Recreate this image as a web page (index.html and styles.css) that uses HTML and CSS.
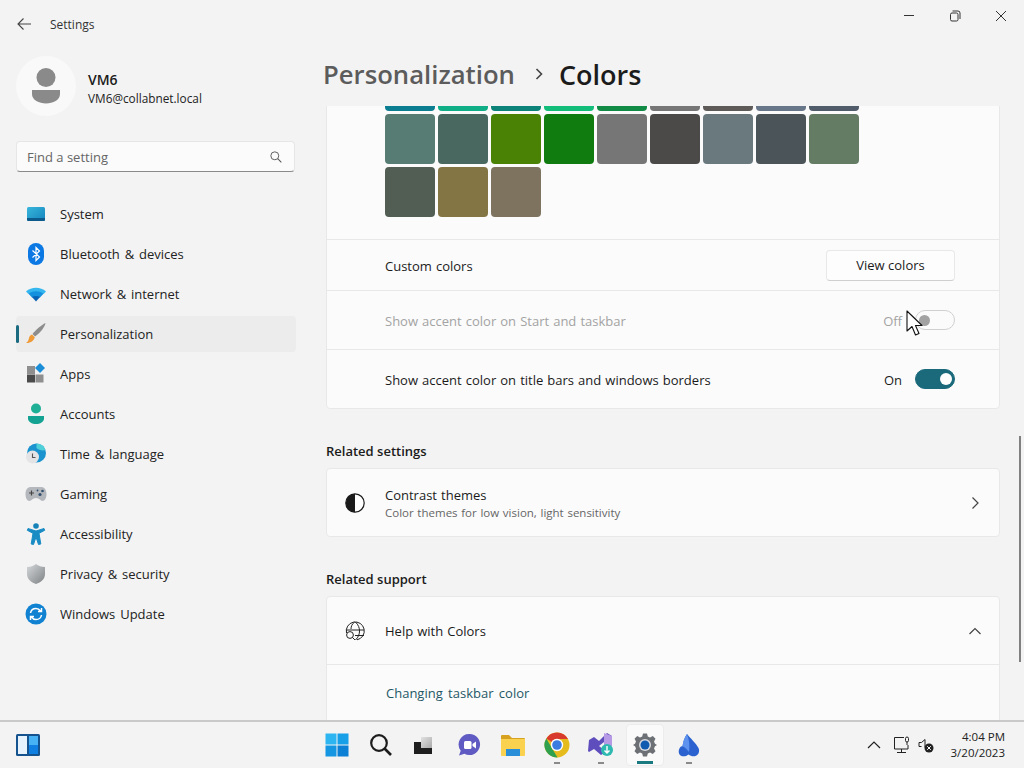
FILE: index.html
```html
<!DOCTYPE html>
<html lang="en">
<head>
    <meta charset="UTF-8">
    <title>Settings</title>
    <link rel="stylesheet" href="styles.css">
</head>
<body>
<div class="window">
    <!-- sidebar -->
    <aside class="sidebar">
        <div class="app-title">
            <svg class="back-icon" width="16" height="16" viewBox="0 0 16 16"><path d="M15 8H2M7.500 2.500 2 8l5.500 5.500" fill="none" stroke="#444" stroke-width="1.100"/></svg>
            <span>Settings</span>
        </div>
        <div class="user">
            <div class="avatar">
                <svg width="30" height="36" viewBox="0 0 30 36"><circle cx="15" cy="9.500" r="9.500" fill="#8a8a8a"/><path d="M1 22h28v4c0 6-7 9.500-14 9.500S1 32 1 26z" fill="#8a8a8a"/></svg>
            </div>
            <div class="user-info">
                <div class="user-name">VM6</div>
                <div class="user-mail">VM6@collabnet.local</div>
            </div>
        </div>
        <div class="search">
            <span>Find a setting</span>
            <svg width="12" height="12" viewBox="0 0 13 13"><circle cx="5.200" cy="5.200" r="4.300" fill="none" stroke="#555"/><path d="M8.300 8.300 12.300 12.300" stroke="#555" stroke-width="1.100"/></svg>
        </div>
        <nav class="nav">
            <div class="nav-item">
                <svg width="22" height="22" viewBox="0 0 22 22"><defs><linearGradient id="sys" x1="0" y1="0" x2="1" y2="1"><stop offset="0" stop-color="#38b6dc"/><stop offset="1" stop-color="#1484bd"/></linearGradient></defs><rect x="2" y="4" width="18" height="14" rx="1.500" fill="url(#sys)"/><path d="M2 15h18v1.500a1.500 1.500 0 0 1-1.500 1.500h-15A1.500 1.500 0 0 1 2 16.500z" fill="#0c5a8c"/></svg>
                <span>System</span>
            </div>
            <div class="nav-item">
                <svg width="22" height="22" viewBox="0 0 22 22"><rect x="3" y="0" width="16" height="22" rx="8" fill="#0b78e3"/><path d="M7.500 7.500 14.500 14 11 17.500V4.500L14.500 8 7.500 14.500" fill="none" stroke="#fff" stroke-width="1.200"/></svg>
                <span>Bluetooth &amp; devices</span>
            </div>
            <div class="nav-item">
                <svg width="22" height="22" viewBox="0 0 22 22"><path d="M1 8.500C6.500 3.500 15.500 3.500 21 8.500L18.500 11H3.500z" fill="#35b6ee"/><path d="M3.500 10.800C8 7.500 14 7.500 18.500 10.800L15 14.500H7z" fill="#1590de"/><path d="M7 14c2.400-1.500 5.600-1.500 8 0l-4 4.500z" fill="#0a62b4"/></svg>
                <span>Network &amp; internet</span>
            </div>
            <div class="nav-item is-active">
                <svg width="22" height="22" viewBox="0 0 22 22"><path d="M20.500 0C20 4 15 10 10 13.500L7.500 11C11 6.500 16.500 2 20.500 0z" fill="#8d8d8d"/><path d="M7 11.500 9.800 14.300C9 18 5 20.500 1 20c2-1 2.500-3 3-5 .4-1.700 1.500-3 3-3.500z" fill="#ef9a37"/></svg>
                <span>Personalization</span>
            </div>
            <div class="nav-item">
                <svg width="22" height="22" viewBox="0 0 22 22"><rect x="2" y="3" width="8" height="8" fill="#8f8f8f"/><rect x="2" y="11.500" width="8" height="8" fill="#4a4a4a"/><rect x="10.500" y="11.500" width="8" height="8" fill="#8f8f8f"/><path d="M15 0l5 5-5 5-5-5z" fill="#1c8ed8"/></svg>
                <span>Apps</span>
            </div>
            <div class="nav-item">
                <svg width="22" height="22" viewBox="0 0 22 22"><circle cx="11" cy="5.500" r="5" fill="#1fae96"/><path d="M3 13h16v2.500c0 3.500-4 5.500-8 5.500s-8-2-8-5.500z" fill="#14a392"/></svg>
                <span>Accounts</span>
            </div>
            <div class="nav-item">
                <svg width="22" height="22" viewBox="0 0 22 22"><circle cx="11.500" cy="10" r="9.500" fill="#1b93cf"/><path d="M11.500 .5a9.500 9.500 0 0 1 9 6.500c-3 1-7 0-9-2z" fill="#4fd0d8"/><circle cx="7.500" cy="14" r="6.500" fill="#e4e4e6"/><path d="M7.500 10.500v4h3" fill="none" stroke="#555" stroke-width="1.100"/></svg>
                <span>Time &amp; language</span>
            </div>
            <div class="nav-item">
                <svg width="22" height="22" viewBox="0 0 22 22"><path d="M5.500 4h11c3 0 5 3 5 7s-1.500 7-4 7c-2 0-3-3-6.500-3s-4.500 3-6.500 3c-2.500 0-4-3-4-7s2-7 5-7z" fill="#b4b8bd"/><path d="M4 10h5M6.500 7.500v5" stroke="#444" stroke-width="1.200"/><circle cx="15" cy="11.500" r="1.600" fill="#35506e"/><circle cx="17.500" cy="8" r="1.300" fill="#35506e"/><circle cx="12.500" cy="7.500" r=".9" fill="#35506e"/></svg>
                <span>Gaming</span>
            </div>
            <div class="nav-item">
                <svg width="22" height="22" viewBox="0 0 22 22"><circle cx="11" cy="3" r="2.800" fill="#1683b8"/><path d="M3 5.500 11 8l8-2.500.7 1.800-5.700 3 1.800 10.700-2.300.5L11 14l-2.500 7.500-2.300-.5L8 10.300l-5.700-3z" fill="#1a8cc4" stroke="#1a8cc4" stroke-linejoin="round"/></svg>
                <span>Accessibility</span>
            </div>
            <div class="nav-item">
                <svg width="22" height="22" viewBox="0 0 22 22"><defs><linearGradient id="shield" x1="0" y1="0" x2="1" y2="1"><stop offset="0" stop-color="#d5d7d9"/><stop offset="1" stop-color="#7e8285"/></linearGradient></defs><path d="M11 1c2.500 2 5.500 3 9 3v7c0 5-4 8.500-9 10-5-1.500-9-5-9-10V4c3.500 0 6.500-1 9-3z" fill="url(#shield)"/></svg>
                <span>Privacy &amp; security</span>
            </div>
            <div class="nav-item">
                <svg width="22" height="22" viewBox="0 0 22 22"><circle cx="11" cy="11" r="10.500" fill="#1182d2"/><path d="M5.500 10C6 7 8.500 5.500 11 5.500c2 0 3.500 1 4.500 2.500M16.500 5v3.500H13M16.500 12c-.5 3-3 4.500-5.500 4.500-2 0-3.500-1-4.500-2.500M5.500 17v-3.500H9" fill="none" stroke="#fff" stroke-width="1.500"/></svg>
                <span>Windows Update</span>
            </div>
        </nav>
    </aside>

    <!-- content -->
    <main class="main">
        <div class="caption-buttons">
            <svg width="12" height="12" viewBox="0 0 12 12"><path d="M1 5.500H11" stroke="#333"/></svg>
            <svg width="12" height="12" viewBox="0 0 12 12"><rect x="1.500" y="3" width="7.500" height="8" rx="1.500" fill="none" stroke="#333"/><path d="M3.500 1h5.500a2 2 0 0 1 2 2v6" fill="none" stroke="#333"/></svg>
            <svg width="12" height="12" viewBox="0 0 12 12"><path d="M1 1 11 11M11 1 1 11" stroke="#333"/></svg>
        </div>
        <h1 class="breadcrumb">
            <span class="crumb-parent">Personalization</span>
            <svg class="crumb-sep" width="12" height="12" viewBox="0 0 12 12"><path d="M3.500 1 8.500 6 3.500 11" fill="none" stroke="#444" stroke-width="1.600"/></svg>
            <span class="crumb-current">Colors</span>
        </h1>
        <div class="scroller">
            <section class="card accent-card">
                <div class="swatches">
                    <div class="swatch" style="background:#0b7d90"></div>
                    <div class="swatch" style="background:#10ae86"></div>
                    <div class="swatch" style="background:#0c8378"></div>
                    <div class="swatch" style="background:#12bd7a"></div>
                    <div class="swatch" style="background:#118a45"></div>
                    <div class="swatch" style="background:#767676"></div>
                    <div class="swatch" style="background:#5d5a58"></div>
                    <div class="swatch" style="background:#68768a"></div>
                    <div class="swatch" style="background:#515c6b"></div>
                    <div class="swatch" style="background:#567c73"></div>
                    <div class="swatch" style="background:#486860"></div>
                    <div class="swatch" style="background:#498205"></div>
                    <div class="swatch" style="background:#107c10"></div>
                    <div class="swatch" style="background:#767676"></div>
                    <div class="swatch" style="background:#4c4a48"></div>
                    <div class="swatch" style="background:#69797e"></div>
                    <div class="swatch" style="background:#4a5459"></div>
                    <div class="swatch" style="background:#647c64"></div>
                    <div class="swatch" style="background:#525e54"></div>
                    <div class="swatch" style="background:#847545"></div>
                    <div class="swatch" style="background:#7e735f"></div>
                </div>
                <div class="row row-custom">
                    <span class="row-label">Custom colors</span>
                    <button class="btn">View colors</button>
                </div>
                <div class="row row-toggle is-disabled">
                    <span class="row-label">Show accent color on Start and taskbar</span>
                    <div class="toggle-wrap">
                        <span class="row-label">Off</span>
                        <div class="toggle"><div class="knob"></div></div>
                    </div>
                </div>
                <div class="row row-toggle">
                    <span class="row-label">Show accent color on title bars and windows borders</span>
                    <div class="toggle-wrap">
                        <span class="row-label">On</span>
                        <div class="toggle is-on"><div class="knob"></div></div>
                    </div>
                </div>
            </section>

            <h2 class="section-title">Related settings</h2>
            <section class="card">
                <div class="row row-link">
                    <svg class="row-icon" width="20" height="20" viewBox="0 0 20 20"><circle cx="10" cy="10" r="9.200" fill="#fff" stroke="#1a1a1a" stroke-width="1.200"/><path d="M10 .8a9.200 9.200 0 0 0 0 18.400z" fill="#1a1a1a"/></svg>
                    <div class="row-text">
                        <div>Contrast themes</div>
                        <div class="row-sub">Color themes for low vision, light sensitivity</div>
                    </div>
                    <svg class="row-chevron" width="12" height="12" viewBox="0 0 12 12"><path d="M3.500 .5 9 6l-5.500 5.500" fill="none" stroke="#444" stroke-width="1.200"/></svg>
                </div>
            </section>

            <h2 class="section-title">Related support</h2>
            <section class="card">
                <div class="row row-link">
                    <svg class="row-icon" width="20" height="20" viewBox="0 0 20 20"><g fill="none" stroke="#222"><path d="M1.500 12A9 9 0 1 1 12 18.800M1 9h18M9.500 1C7 3 6 5.500 6 8M10.500 1c3 3 4 6 4 9s-1 6-4 9M10 14.500h9"/><circle cx="5" cy="14" r="3.400" fill="#fbfbfb"/><path d="M7.400 16.400 10 19"/></g></svg>
                    <div class="row-text">Help with Colors</div>
                    <svg class="row-chevron" width="12" height="12" viewBox="0 0 12 12"><path d="M.5 9 6 3.500 11.500 9" fill="none" stroke="#444" stroke-width="1.200"/></svg>
                </div>
                <div class="support-links">
                    <span class="link">Changing taskbar color</span>
                </div>
            </section>
        </div>
        <div class="scrollbar"></div>
    </main>

    <svg class="cursor" width="17" height="26" viewBox="0 0 17 26"><path d="M1 1V21L6 16.500 9.500 25 13 23.500 9.500 15.500H16z" fill="#fff" stroke="#111" stroke-width="1.100" stroke-linejoin="round"/></svg>
</div>

<!-- taskbar -->
<footer class="taskbar">
    <div class="task-left">
        <svg width="24" height="22" viewBox="0 0 24 22"><rect width="24" height="22" rx="1.500" fill="#15538f"/><rect x="2" y="2" width="9" height="18" fill="#e6f3fd"/><rect x="13" y="2" width="9" height="9" fill="#47b2f4"/><rect x="13" y="11" width="9" height="9" fill="#0f80e2"/></svg>
    </div>
    <div class="task-center">
        <div class="task-icon">
            <svg width="24" height="24" viewBox="0 0 24 24"><rect x="0.500" y="0.500" width="11" height="11" fill="#2cb5f0"/><rect x="12.500" y="0.500" width="11" height="11" fill="#17a0e8"/><rect x="0.500" y="12.500" width="11" height="11" fill="#1596e2"/><rect x="12.500" y="12.500" width="11" height="11" fill="#0c80d4"/></svg>
        </div>
        <div class="task-icon">
            <svg width="24" height="24" viewBox="0 0 24 24"><circle cx="10" cy="10" r="7.800" fill="none" stroke="#1c1c1c" stroke-width="2.200"/><path d="M15.500 15.500 22 22" stroke="#1c1c1c" stroke-width="2.600"/></svg>
        </div>
        <div class="task-icon">
            <svg class="taskview-icon" width="18" height="17" viewBox="0 0 18 17"><defs><linearGradient id="tv" x1="0" y1="0" x2="1" y2="1"><stop offset="0" stop-color="#e2e2e2"/><stop offset="1" stop-color="#a8a8a8"/></linearGradient></defs><rect x="0" y="5" width="18" height="12" fill="#1e1e1e"/><rect x="7" y="0" width="11" height="11" fill="url(#tv)"/></svg>
        </div>
        <div class="task-icon">
            <svg width="24" height="24" viewBox="0 0 24 24"><path d="M12.500 1a10.500 10.500 0 1 1-5 19.700L2 22.500l1.700-4.800A10.500 10.500 0 0 1 12.500 1z" fill="#5f5bc2"/><rect x="7" y="8" width="7.500" height="8" rx="1.500" fill="#fff"/><path d="M15.500 11 19 8.500v7L15.500 13z" fill="#fff"/></svg>
        </div>
        <div class="task-icon">
            <svg width="24" height="22" viewBox="0 0 24 22"><path d="M0 2a1 1 0 0 1 1-1h7l3 3h12a1 1 0 0 1 1 1v2H0z" fill="#d7a21f"/><path d="M0 5h24v16a1 1 0 0 1-1 1H1a1 1 0 0 1-1-1z" fill="#fbd24f"/><rect x="5" y="15" width="14" height="7" fill="#2a8fd8"/></svg>
        </div>
        <div class="task-icon">
            <svg width="26" height="26" viewBox="0 0 26 26"><circle cx="13" cy="13" r="12.500" fill="#e6bb1e"/><path d="M13 .5A12.500 12.500 0 0 1 24 7H13A6 6 0 0 0 7.800 10L2.300 6.500A12.500 12.500 0 0 1 13 .5z" fill="#d93a2e"/><path d="M2.300 6.500 7.800 16 13.500 25.500A12.500 12.500 0 0 1 2.300 6.500z" fill="#2fa04e"/><circle cx="13" cy="13" r="6.200" fill="#fff"/><circle cx="13" cy="13" r="4.800" fill="#3c7be0"/></svg>
        </div>
        <div class="task-icon">
            <svg width="26" height="24" viewBox="0 0 26 24"><path d="M1 7 6 4l5 4 8-8 5 3v9h-8V9l-5 4 5 4v3l-3 2-7-6-5 3-1-1z" fill="#5e4dbd"/><path d="M16 0l8 3v10h-8z" fill="#b79ae6"/><circle cx="19" cy="17" r="6" fill="#2db8b0"/><path d="M19 13v7M16.500 17.500 19 20l2.500-2.500" fill="none" stroke="#fff" stroke-width="1.400"/></svg>
        </div>
        <div class="task-icon is-open">
            <svg width="24" height="24" viewBox="0 0 24 24"><path d="M10 .5h4l.8 3 2.200 1 2.800-1.500 2.700 2.800L21 8.500l1 2.300 2 1.200-2 1.200-1 2.300 1.500 2.700-2.700 2.800-2.800-1.500-2.200 1L14 23.500h-4l-.8-3-2.200-1-2.800 1.500-2.700-2.800L3 15.500l-1-2.300L0 12l2-1.200 1-2.300L1.500 5.800l2.700-2.800L7 4.500l2.200-1z" fill="#6d7075"/><circle cx="12" cy="12" r="6" fill="#d9dde2"/><circle cx="12" cy="12" r="4.500" fill="#0f5bb0"/></svg>
        </div>
        <div class="task-icon">
            <svg width="22" height="23" viewBox="0 0 22 23"><path d="M9 0c3 4 9 9 11.500 14 1.500 3.500 0 7-3 8-2.500.8-5-.2-7-1.500-2.500 2-5.500 2.500-8 1C.5 20 0 16.500 2 13.500c.7-1 1.700-1.500 2.500-1.200C5 8 6.500 3.500 9 0z" fill="#2b62cf"/><path d="M9 0c2 5 3 11 2 18-1.500-2-4-4.500-6.500-5.700C5 8 6.500 3.500 9 0z" fill="#5d92ee"/></svg>
        </div>
    </div>
    <div class="task-right">
        <svg class="tray-chevron" width="14" height="10" viewBox="0 0 14 10"><path d="M1 8 7 2l6 6" fill="none" stroke="#222" stroke-width="1.200"/></svg>
        <svg class="tray-monitor" width="18" height="18" viewBox="0 0 18 18"><path d="M11 1.500H1.500v11.500H15V9M8.500 13v3.500M4 16.500h9" fill="none" stroke="#222"/><rect x="12.500" y="1" width="3" height="5" rx="1.500" fill="none" stroke="#222"/><path d="M14 6v3" stroke="#222"/></svg>
        <svg width="16" height="16" viewBox="0 0 16 16"><path d="M1 5.500h2.500L7 2.500v8" fill="none" stroke="#222"/><path d="M1 5.500v4h2.500" fill="none" stroke="#222"/><circle cx="11" cy="11" r="4.500" fill="#222"/><path d="M9.200 9.200 12.800 12.800M12.800 9.200 9.200 12.800" stroke="#fff"/></svg>
        <div class="clock">
            <div>4:04 PM</div>
            <div>3/20/2023</div>
        </div>
    </div>
</footer>
</body>
</html>
```

FILE: styles.css
```css
* {
    box-sizing: border-box;
}

html, body {
    margin: 0;
    height: 100%;
}

body {
    width: 1024px;
    height: 768px;
    overflow: hidden;
    background-color: #f3f3f3;
    color: #1b1b1b;
    font-family: "Open Sans", "Noto Sans", sans-serif;
    font-size: 13px;
}

.window {
    display: flex;
    height: 720px;
    position: relative;
}

/* sidebar */
.sidebar {
    width: 326px;
    flex-shrink: 0;
    padding-left: 16px;
}

.app-title {
    display: flex;
    align-items: center;
    height: 48px;
    font-size: 12px;
    color: #333;
}

.back-icon {
    margin-right: 18px;
}

.user {
    display: flex;
    align-items: center;
    height: 60px;
    margin-top: 8px;
}

.avatar {
    display: flex;
    align-items: center;
    justify-content: center;
    width: 60px;
    height: 60px;
    margin-right: 12px;
    border-radius: 50%;
    background-color: #f9f9f9;
}

.user-info {
    padding-top: 6px;
}

.user-name {
    font-size: 14px;
    font-weight: 600;
    line-height: 18px;
}

.user-mail {
    font-size: 11.800px;
    line-height: 18px;
    color: #222;
}

.search {
    display: flex;
    align-items: center;
    justify-content: space-between;
    width: 279px;
    height: 31px;
    margin-top: 25px;
    padding: 0 12px 0 10px;
    background-color: #fbfbfb;
    border: 1px solid #e6e6e6;
    border-bottom-color: #8a8a8a;
    border-radius: 4px;
    color: #666;
}

.nav {
    margin-top: 24px;
    word-spacing: 1.500px;
}

.nav-item {
    display: flex;
    align-items: center;
    width: 280px;
    height: 36px;
    margin-bottom: 4px;
    padding-left: 9px;
    border-radius: 4px;
    position: relative;
    color: #222;
}

.nav-item svg {
    margin-right: 13px;
}

.nav-item.is-active {
    background-color: #ececec;
}

.nav-item.is-active::before {
    content: "";
    position: absolute;
    left: 0;
    top: 9px;
    width: 3px;
    height: 18px;
    border-radius: 2px;
    background-color: #1a6a80;
}

/* content */
.main {
    width: 698px;
    display: flex;
    flex-direction: column;
    position: relative;
}

.caption-buttons {
    display: flex;
    justify-content: flex-end;
    gap: 34px;
    height: 32px;
    padding: 10px 17px 0 0;
}

.breadcrumb {
    display: flex;
    align-items: center;
    height: 74px;
    margin: 0 0 0 -3px;
    padding-top: 10px;
    font-size: 25.700px;
    font-weight: 600;
}

.crumb-parent {
    color: #5c5c5c;
}

.crumb-sep {
    margin: 0 14px 0 18px;
}

.crumb-current {
    font-size: 27px;
}

.scroller {
    height: 614px;
    overflow: hidden;
    width: 674px;
    word-spacing: .700px;
}

.card {
    background-color: #fbfbfb;
    border: 1px solid #e8e8e8;
    border-radius: 4px;
}

.accent-card {
    margin-top: -46px;
}

.swatches {
    display: grid;
    grid-template-columns: repeat(9, 50px);
    grid-auto-rows: 50px;
    gap: 3px;
    padding: 0 0 22px 58px;
}

.swatch {
    border-radius: 4px;
}

.row {
    display: flex;
    align-items: center;
    justify-content: space-between;
    padding: 0 44px 0 58px;
    border-top: 1px solid #e8e8e8;
}

.row-label {
    padding-top: 2px;
}

.row-custom {
    height: 51px;
}

.row-toggle {
    height: 59px;
}

.is-disabled {
    color: #a3a3a3;
}

.btn {
    width: 129px;
    height: 31px;
    background-color: #fdfdfd;
    border: 1px solid #e8e8e8;
    border-bottom-color: #cfcfcf;
    border-radius: 4px;
    color: #1b1b1b;
    font-family: inherit;
    font-size: 13px;
}

.toggle-wrap {
    display: flex;
    align-items: center;
    gap: 13px;
}

.toggle {
    display: flex;
    align-items: center;
    width: 40px;
    height: 20px;
    padding: 0 3px;
    border: 1px solid #d0d0d0;
    border-radius: 10px;
}

.knob {
    width: 11px;
    height: 11px;
    border-radius: 50%;
    background-color: #a2a2a2;
}

.toggle.is-on {
    justify-content: flex-end;
    padding-right: 2px;
    background-color: #1b6a7c;
    border-color: #1b6a7c;
}

.toggle.is-on .knob {
    width: 12px;
    height: 12px;
    background-color: #fff;
}

.section-title {
    height: 59px;
    margin: 0;
    padding-top: 33px;
    font-size: 13px;
    font-weight: 600;
    line-height: 18px;
    word-spacing: 0;
}

.row-link {
    justify-content: flex-start;
    height: 67px;
    padding: 0 18px;
    border-top: 0;
}

.row-icon {
    margin-right: 20px;
    flex-shrink: 0;
}

.row-text {
    flex: 1;
    padding-top: 2px;
    line-height: 17px;
}

.row-sub {
    font-size: 11.500px;
    color: #666;
}

.support-links {
    height: 60px;
    padding: 19px 0 0 59px;
    border-top: 1px solid #e8e8e8;
}

.link {
    color: #1f5866;
    word-spacing: 2px;
}

.scrollbar {
    position: absolute;
    left: 693px;
    top: 436px;
    width: 2px;
    height: 226px;
    background-color: #808080;
}

.cursor {
    position: absolute;
    left: 906px;
    top: 310px;
}

/* taskbar */
.taskbar {
    display: grid;
    grid-template-columns: 1fr auto 1fr;
    align-items: center;
    height: 48px;
    background-color: #f3f3f3;
    border-top: 2px solid #c9c9c9;
}

.task-left {
    display: flex;
    padding-left: 16px;
}

.task-center {
    display: flex;
    padding-left: 2px;
}

.task-icon {
    display: flex;
    align-items: center;
    justify-content: center;
    width: 44px;
    height: 46px;
    position: relative;
}

.task-icon.is-open::before {
    content: "";
    position: absolute;
    left: 3px;
    right: 3px;
    top: 2px;
    bottom: 2px;
    background-color: #fafafa;
    border-radius: 4px;
    border: 1px solid #ececec;
}

.task-icon svg {
    position: relative;
}

.task-icon .taskview-icon {
    margin-right: 4px;
}

.task-icon:nth-child(n+6)::after {
    content: "";
    position: absolute;
    left: 19px;
    bottom: 4px;
    width: 6px;
    height: 2px;
    background-color: #8a8a8a;
}

.task-icon.is-open::after {
    left: 14px;
    width: 16px;
    height: 3px;
    background-color: #1a7a80;
}

.task-right {
    display: flex;
    align-items: center;
    justify-content: flex-end;
    gap: 9px;
    padding-right: 19px;
}

.tray-chevron {
    margin-right: 3px;
}

.tray-monitor {
    margin-right: -2px;
}

.clock {
    margin-left: 8px;
    font-size: 11.500px;
    line-height: 16px;
    text-align: right;
    color: #222;
}
```
